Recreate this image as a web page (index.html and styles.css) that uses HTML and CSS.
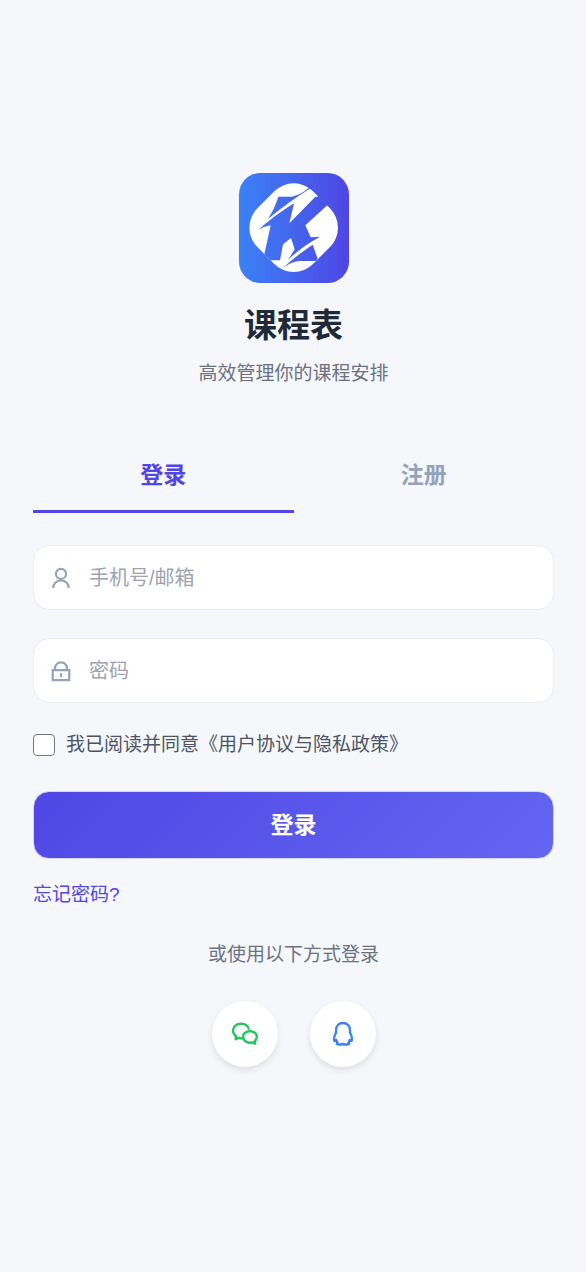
FILE: index.html
```html
<!DOCTYPE html>
<html lang="zh-CN">
<head>
<meta charset="utf-8">
<meta name="viewport" content="width=device-width, initial-scale=1">
<title>课程表</title>
<link rel="stylesheet" href="styles.css">
</head>
<body>
<main class="page">
  <header class="brand">
    <svg class="logo" viewBox="33 30 330 330" aria-hidden="true">
      <defs>
        <linearGradient id="logo-fill" gradientUnits="userSpaceOnUse" x1="33" y1="0" x2="363" y2="0">
          <stop offset="0" stop-color="#3b82f6"/>
          <stop offset="1" stop-color="#4f46e5"/>
        </linearGradient>
      </defs>
      <rect x="33" y="30" width="330" height="330" rx="64" fill="url(#logo-fill)"/>
      <rect x="79" y="76" width="236" height="236" rx="82" fill="#fff" transform="rotate(45 197 194)"/>
      <g fill="url(#logo-fill)">
        <path d="M151 101 L192 101 Q218 96 246 72 L248 76 Q188 112 120 168 Q142 132 151 101Z"/>
        <path d="M198 121 L184 181 L262 101 L269 101 L272 96 L301 124 L232 187 L248 223 L276 221 Q222 250 180 291 L200 259 L189 225 L165 244 L156 292 L128 292 L109 274 L128 187 Q106 190 90 201 Q140 157 198 121Z"/>
        <path d="M254 245 L269 287 L263 294 L212 294 Q184 298 160 319 Q204 278 254 245Z"/>
      </g>
    </svg>
    <h1 class="title">课程表</h1>
    <p class="subtitle">高效管理你的课程安排</p>
  </header>

  <div class="tabs" role="tablist">
    <button class="tab tab-active" type="button" role="tab" aria-selected="true">登录</button>
    <button class="tab" type="button" role="tab" aria-selected="false">注册</button>
  </div>

  <form class="form">
    <div class="field">
      <svg class="field-icon" viewBox="0 0 24 24" aria-hidden="true"><circle cx="12" cy="7.500" r="5.500"/><path d="M3.500 23a8.500 8.500 0 0 1 17 0"/></svg>
      <input class="field-input" type="text" placeholder="手机号/邮箱" aria-label="手机号/邮箱">
    </div>
    <div class="field">
      <svg class="field-icon" viewBox="0 0 24 24" aria-hidden="true"><path d="M3 11h18v11H3zM5.500 11V9a6.500 6.500 0 0 1 13 0v2M12 14.500v4"/></svg>
      <input class="field-input" type="password" placeholder="密码" aria-label="密码">
    </div>
    <label class="agree"><input class="agree-box" type="checkbox"><span>我已阅读并同意《用户协议与隐私政策》</span></label>
    <button class="submit" type="button">登录</button>
    <a class="forgot" href="#">忘记密码?</a>
  </form>

  <section class="social">
    <p class="social-text">或使用以下方式登录</p>
    <div class="social-list">
      <button class="social-button wechat" type="button" aria-label="微信登录">
        <svg class="social-icon" viewBox="0 0 28 28" aria-hidden="true"><path d="M12.200 18.200c-1.500.3-3.200.1-4.600-.4L4.700 19.200 4.900 16C2.800 14.400 2 12.600 2 10.600c0-4 3.600-6.900 8-6.900 4.100 0 7.400 2.400 8 5.900"/><path d="M19 11.200c3.900 0 6.900 2.400 6.900 5.600 0 1.700-.8 3.200-2.100 4.200l.3 2.600-2.700-1.200c-.8.2-1.600.3-2.400.3-3.900 0-6.900-2.500-6.900-5.900s3-5.600 6.900-5.600z"/></svg>
      </button>
      <button class="social-button qq" type="button" aria-label="QQ登录">
        <svg class="social-icon" viewBox="0 0 28 28" aria-hidden="true"><path d="M14 3c-4.300 0-7 3-7 7.200v2.300c-1.300 2.500-2.200 5-2 7.300.2 1.500 1 1.700 2.200.2.300 1.200.7 1.900 1.300 2.500-1.200.9-.8 2 .9 2h3.200L14 24l1.400.5h3.200c1.700 0 2.100-1.100.9-2 .6-.6 1-1.300 1.300-2.500 1.200 1.500 2 1.300 2.200-.2.200-2.300-.7-4.800-2-7.300v-2.300C21 6 18.300 3 14 3z"/></svg>
      </button>
    </div>
  </section>
</main>
</body>
</html>
```
FILE: styles.css
```css
* {
  box-sizing: border-box;
}

body {
  margin: 0;
  min-height: 100vh;
  background: #f5f7fb;
  color: #1f2937;
  font-family: "Liberation Sans", "Noto Sans CJK SC", sans-serif;
}

button,
input {
  font-family: inherit;
}

.page {
  padding: 173px 32px 48px 33px;
}

.brand {
  display: flex;
  flex-direction: column;
  align-items: center;
}

.logo {
  width: 110px;
  height: 110px;
}

.title {
  margin: 21px 0 12px;
  font-size: 33px;
  line-height: 44px;
  font-weight: 700;
}

.subtitle {
  margin: 0;
  color: #6b7280;
  font-size: 19px;
  line-height: 28px;
}

.tabs {
  display: flex;
  margin-top: 52px;
}

.tab {
  flex: 1;
  padding: 18px 0;
  border: 0;
  border-bottom: 3px solid transparent;
  background: none;
  color: #94a3b8;
  font-size: 23px;
  line-height: 34px;
  font-weight: 700;
}

.tab-active {
  border-bottom-color: #4f46e5;
  color: #4f46e5;
}

.form {
  display: flex;
  flex-direction: column;
  margin-top: 32px;
}

.field {
  display: flex;
  align-items: center;
  gap: 17px;
  height: 65px;
  margin-bottom: 28px;
  padding: 0 16px;
  border: 1px solid #e8edf3;
  border-radius: 16px;
  background: #fff;
}

.field-icon {
  flex: none;
  width: 22px;
  height: 22px;
  fill: none;
  stroke: #94a3b8;
  stroke-width: 2.4;
}

.field-input {
  flex: 1;
  min-width: 0;
  padding: 0;
  border: 0;
  outline: 0;
  background: none;
  color: #1f2937;
  font-size: 20px;
  line-height: 30px;
}

.field-input::placeholder {
  color: #9ca3af;
}

.agree {
  display: flex;
  align-items: center;
  gap: 11px;
  color: #4b5563;
  font-size: 19px;
  line-height: 28px;
}

.agree-box {
  appearance: none;
  flex: none;
  width: 22px;
  height: 22px;
  margin: 0;
  border: 1px solid #767676;
  border-radius: 4px;
  background: #fff;
}

.agree-box:checked {
  background: #4f46e5;
}

.submit {
  height: 68px;
  margin: 32px 0 22px;
  padding: 0 0 4px;
  border: 1px solid #d5d5f5;
  border-radius: 16px;
  background: linear-gradient(135deg, #4f46e5, #6366f1) border-box;
  color: #fff;
  font-size: 23px;
  font-weight: 700;
}

.forgot {
  align-self: flex-start;
  color: #4f46e5;
  font-size: 19px;
  line-height: 28px;
  text-decoration: none;
}

.social {
  margin-top: 32px;
}

.social-text {
  margin: 0 0 32px;
  color: #6b7280;
  font-size: 19px;
  line-height: 28px;
  text-align: center;
}

.social-list {
  display: flex;
  justify-content: center;
  gap: 32px;
}

.social-button {
  display: flex;
  align-items: center;
  justify-content: center;
  width: 66px;
  height: 66px;
  padding: 0;
  border: 0;
  border-radius: 50%;
  background: #fff;
  box-shadow: 0 3px 6px rgba(0, 0, 0, 0.1);
}

.social-icon {
  width: 28px;
  height: 28px;
  fill: none;
  stroke: currentColor;
  stroke-width: 2.4;
  stroke-linejoin: round;
}

.wechat {
  color: #22c55e;
}

.qq {
  color: #3b82f6;
}
```
